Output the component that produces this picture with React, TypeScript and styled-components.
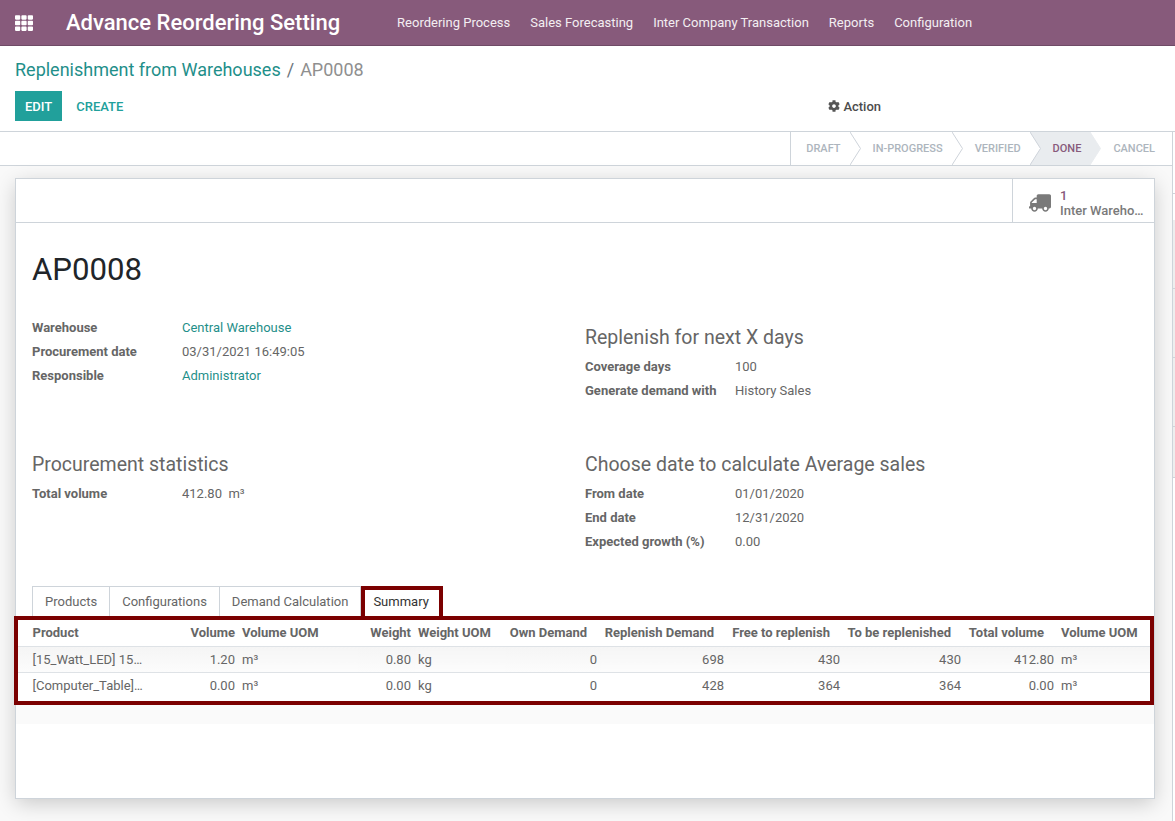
import React from 'react';
import styled, { createGlobalStyle } from 'styled-components';
import { FaCog, FaTh, FaTruck } from 'react-icons/fa';

const GlobalStyle = createGlobalStyle`
  html, body {
    margin: 0;
    padding: 0;
    height: 100%;
    overflow: hidden;
    background: #f9f9f9;
    font-family: Roboto, "Noto Sans", sans-serif;
    font-size: 13px;
    color: #666666;
  }
`;

const Navbar = styled.nav`
  display: flex;
  align-items: center;
  height: 45px;
  background: #875a7b;
  border-bottom: 1px solid #6f4b66;
  color: #ffffff;
`;

const AppsButton = styled.span`
  display: flex;
  margin-left: 15px;
  font-size: 18px;
`;

const BrandName = styled.span`
  margin-left: 33px;
  font-size: 22px;
  font-weight: 500;
`;

const NavMenu = styled.div`
  display: flex;
  gap: 20px;
  margin-left: 57px;
  color: #f3eef2;
`;

const ControlPanel = styled.div`
  height: 85px;
  background: #ffffff;
  border-bottom: 1px solid #ced4da;
  padding: 0 15px;
`;

const Breadcrumb = styled.div`
  display: flex;
  align-items: center;
  gap: 6px;
  height: 43px;
  padding-top: 2px;
  font-size: 18px;
  color: #6c757d;
`;

const CrumbLink = styled.span`
  color: #1f8f8a;
`;

const CrumbCurrent = styled.span`
  color: #8f8f8f;
`;

const ActionRow = styled.div`
  display: flex;
  align-items: center;
  height: 30px;
`;

const EditButton = styled.span`
  display: flex;
  align-items: center;
  height: 30px;
  padding: 0 10px;
  background: #21a09b;
  color: #ffffff;
  font-size: 13px;
  font-weight: 500;
`;

const CreateButton = styled.span`
  margin-left: 14px;
  color: #21a09b;
  font-size: 13px;
  font-weight: 500;
`;

const ActionMenu = styled.span`
  display: flex;
  align-items: center;
  gap: 3px;
  margin-left: 705px;
  color: #4c4c4c;
  font-weight: 500;
  font-size: 13px;
  svg {
    font-size: 12px;
    color: #555555;
  }
`;

const Workspace = styled.div`
  display: flex;
  height: 689px;
`;

const Content = styled.div`
  flex: 1;
  min-width: 0;
`;

const StatusRow = styled.div`
  display: flex;
  justify-content: flex-end;
  height: 33px;
  background: #ffffff;
  border-bottom: 1px solid #ced4da;
  padding-right: 8px;
`;

const StatusStep = styled.div<{ $done?: boolean; $first?: boolean }>`
  position: relative;
  display: flex;
  align-items: center;
  padding: 0 9px 0 ${p => (p.$first ? '15px' : '23px')};
  border-left: ${p => (p.$first ? '1px solid #ced4da' : 'none')};
  background: ${p => (p.$done ? '#e9ecef' : 'transparent')};
  color: ${p => (p.$done ? '#875a7b' : '#adb5bd')};
  font-size: 11px;
  font-weight: 500;
  text-transform: uppercase;
`;

const StepArrow = styled.svg`
  position: absolute;
  top: 0;
  left: 100%;
  z-index: 1;
`;

const Main = styled.main`
  padding: 12px 17px 0 15px;
`;

const Sheet = styled.section`
  height: 621px;
  box-sizing: border-box;
  background: #ffffff;
  border: 1px solid #ced4da;
  box-shadow: 0 5px 20px -1px rgba(0, 0, 0, 0.2);
`;

const ButtonBox = styled.div`
  display: flex;
  justify-content: flex-end;
  height: 43px;
  border-bottom: 1px solid #ced4da;
`;

const StatButton = styled.div`
  display: flex;
  align-items: center;
  gap: 9px;
  width: 142px;
  box-sizing: border-box;
  padding: 5px 0 0 16px;
  border-left: 1px solid #ced4da;
  svg {
    font-size: 22px;
    color: #7a7a7a;
    transform: scaleX(-1);
  }
`;

const StatText = styled.div`
  display: flex;
  flex-direction: column;
  font-size: 13px;
  font-weight: 500;
  line-height: 15px;
  color: #7a7a7a;
`;

const StatValue = styled.span`
  color: #875a7b;
`;

const SheetBody = styled.div`
  padding: 0 16px;
`;

const RecordTitle = styled.h1`
  margin: 0;
  padding: 26px 0 0;
  height: 77px;
  box-sizing: border-box;
  font-size: 31.2px;
  font-weight: 400;
  line-height: 41px;
  color: #212529;
`;

const GroupGrid = styled.div`
  display: grid;
  grid-template-columns: 553px 1fr;
  grid-template-rows: 151px 135px;
`;

const Group = styled.div<{ $top?: number }>`
  padding-top: ${p => p.$top ?? 0}px;
`;

const GroupTitle = styled.h2`
  margin: 0 0 2px;
  font-size: 19.5px;
  font-weight: 400;
  line-height: 28px;
  color: #666666;
`;

const Field = styled.div`
  display: grid;
  grid-template-columns: 150px 1fr;
  height: 24px;
  align-items: center;
`;

const FieldLabel = styled.span`
  font-weight: 700;
  color: #666666;
`;

const FieldValue = styled.span<{ $link?: boolean }>`
  color: ${p => (p.$link ? '#1f8f8a' : '#666666')};
`;

const TabList = styled.div`
  display: flex;
  height: 30px;
`;

const Tab = styled.div<{ $active?: boolean }>`
  display: flex;
  align-items: center;
  padding: 0 12px;
  border: 1px solid #ced4da;
  border-bottom: none;
  margin-left: -1px;
  &:first-child {
    margin-left: 0;
  }
  ${p =>
    p.$active &&
    `
    position: relative;
    z-index: 1;
    margin-left: 0;
    padding: 0 10px 4px 8px;
    border: 4px solid #7b0000;
    border-bottom: none;
    color: #333333;
  `}
`;

const TableFrame = styled.div`
  margin: 0 -16px 0 -18px;
  border: 4px solid #7b0000;
`;

const SummaryTable = styled.table`
  width: 100%;
  table-layout: fixed;
  border-collapse: collapse;
`;

const HeadCell = styled.th<{ $right?: boolean; $gap?: boolean }>`
  box-sizing: border-box;
  height: 26px;
  padding: 0 ${p => (p.$gap ? '13.5px' : '3.5px')} 0 3.5px;
  text-align: ${p => (p.$right ? 'right' : 'left')};
  font-weight: 700;
  white-space: nowrap;
  color: #666666;
  &:first-child {
    padding-left: 14.5px;
  }
`;

const HeadRow = styled.tr`
  border-bottom: 1px solid #dee2e6;
`;

const Cell = styled.td<{ $right?: boolean }>`
  box-sizing: border-box;
  height: 26px;
  padding: 0 3.5px;
  text-align: ${p => (p.$right ? 'right' : 'left')};
  white-space: nowrap;
  overflow: hidden;
  text-overflow: ellipsis;
  &:first-child {
    padding-left: 14.5px;
  }
`;

const BodyRow = styled.tr<{ $shade?: boolean }>`
  border-top: 1px solid #dee2e6;
  background: ${p => (p.$shade ? 'linear-gradient(to bottom, #f5f5f5, #fcfcfc)' : '#ffffff')};
  &:last-child ${Cell} {
    height: 29px;
    padding-bottom: 2px;
  }
`;

const TableFoot = styled.div`
  height: 19px;
  margin: 0 -16px;
  background: #fafafa;
`;

const SidePanel = styled.aside`
  width: 2px;
  background: #ffffff;
  border-left: 1px solid #ced4da;
`;

const SideBlock = styled.div<{ $height: number; $shade?: boolean; $line?: boolean }>`
  height: ${p => p.$height}px;
  background: ${p => (p.$shade ? '#eeeeee' : '#ffffff')};
  border-bottom: ${p => (p.$line ? '1px solid #ced4da' : 'none')};
`;

const columns = [
  { title: 'Product', width: 129 },
  { title: 'Volume', width: 91.5, right: true },
  { title: 'Volume UOM', width: 119.5 },
  { title: 'Weight', width: 56.5, right: true },
  { title: 'Weight UOM', width: 90.5 },
  { title: 'Own Demand', width: 95.5, right: true, gap: true },
  { title: 'Replenish Demand', width: 127, right: true, gap: true },
  { title: 'Free to replenish', width: 116, right: true, gap: true },
  { title: 'To be replenished', width: 121, right: true, gap: true },
  { title: 'Total volume', width: 93, right: true, gap: true },
  { title: 'Volume UOM', width: 92.5 },
];

const rows = [
  ['[15_Watt_LED] 15 Watt LED Bulb', '1.20', 'm³', '0.80', 'kg', '0', '698', '430', '430', '412.80', 'm³'],
  ['[Computer_Table] Computer Table', '0.00', 'm³', '0.00', 'kg', '0', '428', '364', '364', '0.00', 'm³'],
];

const steps = ['Draft', 'In-Progress', 'Verified', 'Done', 'Cancel'];

const App: React.FC = () => {
  return (
    <>
      <GlobalStyle />
      <Navbar>
        <AppsButton>
          <FaTh />
        </AppsButton>
        <BrandName>Advance Reordering Setting</BrandName>
        <NavMenu>
          <span>Reordering Process</span>
          <span>Sales Forecasting</span>
          <span>Inter Company Transaction</span>
          <span>Reports</span>
          <span>Configuration</span>
        </NavMenu>
      </Navbar>

      <ControlPanel>
        <Breadcrumb>
          <CrumbLink>Replenishment from Warehouses</CrumbLink>
          <span>/</span>
          <CrumbCurrent>AP0008</CrumbCurrent>
        </Breadcrumb>
        <ActionRow>
          <EditButton>EDIT</EditButton>
          <CreateButton>CREATE</CreateButton>
          <ActionMenu>
            <FaCog /> Action
          </ActionMenu>
        </ActionRow>
      </ControlPanel>

      <Workspace>
        <Content>
          <StatusRow>
            {steps.map((step, i) => (
              <StatusStep key={step} $first={i === 0} $done={step === 'Done'}>
                {step}
                {i < steps.length - 1 && (
                  <StepArrow width="11" height="33" viewBox="0 0 11 33">
                    <path
                      d="M0 0 L10.5 16.5 L0 33 Z"
                      fill={step === 'Done' ? '#e9ecef' : '#ffffff'}
                    />
                    <path
                      d="M0 0 L10.5 16.5 L0 33"
                      fill="none"
                      stroke={step === 'Done' ? '#e9ecef' : '#ced4da'}
                    />
                  </StepArrow>
                )}
              </StatusStep>
            ))}
          </StatusRow>

          <Main>
            <Sheet>
              <ButtonBox>
                <StatButton>
                  <FaTruck />
                  <StatText>
                    <StatValue>1</StatValue>
                    <span>Inter Wareho…</span>
                  </StatText>
                </StatButton>
              </ButtonBox>

              <SheetBody>
                <RecordTitle>AP0008</RecordTitle>

                <GroupGrid>
                  <Group $top={15}>
                    <Field>
                      <FieldLabel>Warehouse</FieldLabel>
                      <FieldValue $link>Central Warehouse</FieldValue>
                    </Field>
                    <Field>
                      <FieldLabel>Procurement date</FieldLabel>
                      <FieldValue>03/31/2021 16:49:05</FieldValue>
                    </Field>
                    <Field>
                      <FieldLabel>Responsible</FieldLabel>
                      <FieldValue $link>Administrator</FieldValue>
                    </Field>
                  </Group>
                  <Group $top={24}>
                    <GroupTitle>Replenish for next X days</GroupTitle>
                    <Field>
                      <FieldLabel>Coverage days</FieldLabel>
                      <FieldValue>100</FieldValue>
                    </Field>
                    <Field>
                      <FieldLabel>Generate demand with</FieldLabel>
                      <FieldValue>History Sales</FieldValue>
                    </Field>
                  </Group>
                  <Group>
                    <GroupTitle>Procurement statistics</GroupTitle>
                    <Field>
                      <FieldLabel>Total volume</FieldLabel>
                      <FieldValue>412.80&nbsp; m³</FieldValue>
                    </Field>
                  </Group>
                  <Group>
                    <GroupTitle>Choose date to calculate Average sales</GroupTitle>
                    <Field>
                      <FieldLabel>From date</FieldLabel>
                      <FieldValue>01/01/2020</FieldValue>
                    </Field>
                    <Field>
                      <FieldLabel>End date</FieldLabel>
                      <FieldValue>12/31/2020</FieldValue>
                    </Field>
                    <Field>
                      <FieldLabel>Expected growth (%)</FieldLabel>
                      <FieldValue>0.00</FieldValue>
                    </Field>
                  </Group>
                </GroupGrid>

                <TabList>
                  <Tab>Products</Tab>
                  <Tab>Configurations</Tab>
                  <Tab>Demand Calculation</Tab>
                  <Tab $active>Summary</Tab>
                </TabList>

                <TableFrame>
                  <SummaryTable>
                    <colgroup>
                      {columns.map((col, i) => (
                        <col key={i} width={col.width} />
                      ))}
                    </colgroup>
                    <thead>
                      <HeadRow>
                        {columns.map((col, i) => (
                          <HeadCell key={i} $right={col.right} $gap={col.gap}>
                            {col.title}
                          </HeadCell>
                        ))}
                      </HeadRow>
                    </thead>
                    <tbody>
                      {rows.map((row, r) => (
                        <BodyRow key={r} $shade={r === 0}>
                          {row.map((value, i) => (
                            <Cell key={i} $right={columns[i].right}>
                              {value}
                            </Cell>
                          ))}
                        </BodyRow>
                      ))}
                    </tbody>
                  </SummaryTable>
                </TableFrame>
                <TableFoot />
              </SheetBody>
            </Sheet>
          </Main>
        </Content>

        <SidePanel>
          <SideBlock $height={61} $line />
          <SideBlock $height={26} />
          <SideBlock $height={68} $shade $line />
          <SideBlock $height={68} $shade $line />
          <SideBlock $height={68} $shade $line />
          <SideBlock $height={50} $shade $line />
        </SidePanel>
      </Workspace>
    </>
  );
};

export default App;
